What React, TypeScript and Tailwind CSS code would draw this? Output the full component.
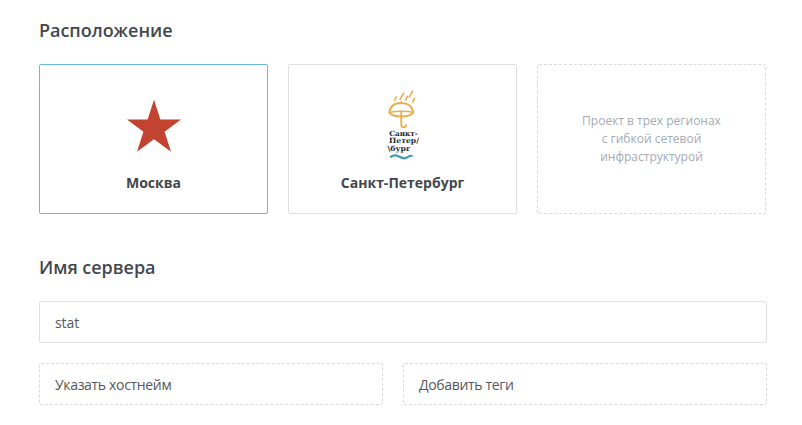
function Star() {
  return (
    <svg className="mt-[34px] block h-[54px] w-[56px] shrink-0" viewBox="0 0 56 54">
      <path
        d="M28 0.8 L34.4 20.6 L55 20.6 L38.6 32.7 L45 52.8 L28 40.3 L11 52.8 L17.4 32.7 L1 20.6 L21.6 20.6 Z"
        fill="#c2432f"
      />
    </svg>
  );
}

function Umbrella() {
  return (
    <svg className="mt-[24px] block h-[74px] w-[36px] shrink-0" viewBox="385 89 36 74">
      <g fill="none" stroke="#e9ad4a" strokeWidth="1.6" strokeLinecap="round">
        <path d="M394.6 100.5 L396.2 97 M400 99.5 L403.6 93.2 M405.8 100 L407.4 96.4 M409.2 97.2 L412.8 91.2 M412.8 102 L414.4 98.4" />
        <path
          d="M389.3 112.8 C390 106 395 103 401.2 103 C407.4 103 412.6 106 413.2 112.8 C411 115.3 406.8 116.4 401.3 116.4 C395.8 116.4 391.6 115.3 389.3 112.8 Z"
          strokeWidth="1.9"
        />
        <path d="M389.8 112.4 C395 110.8 407.8 110.8 413 112.4 M401.3 101.6 V103" />
        <path d="M401.3 112 V124.8 C401.3 128.2 406 128.2 406 125" strokeWidth="1.9" />
      </g>
      <g fill="#26282b" fontFamily="'DejaVu Serif', serif" fontWeight="700" fontSize="7.2">
        <text x="389.2" y="135.6" textLength="28.6" lengthAdjust="spacingAndGlyphs">Санкт-</text>
        <text x="389" y="143.2" textLength="30" lengthAdjust="spacingAndGlyphs">Петер/</text>
        <text x="387.4" y="150.5" textLength="23.4" lengthAdjust="spacingAndGlyphs">\бург</text>
      </g>
      <path
        d="M390.2 157.3 C393 154.8 396 154.8 399 156.6 C402.5 158.6 406 158.6 408 156.8 C409.3 155.7 410.8 155.6 412.6 156"
        fill="none"
        stroke="#4a9db3"
        strokeWidth="2.3"
      />
    </svg>
  );
}

export default function App() {
  return (
    <main className="h-[425px] w-[802px] overflow-hidden bg-white pl-[39px] font-['Open_Sans','Noto_Sans',sans-serif] text-[#43474d]">
      <h2 className="h-16 pt-4 text-[18px] leading-7 font-semibold tracking-[-0.03px]">Расположение</h2>
      <div className="flex gap-5">
        <button className="flex h-[150px] w-[229px] flex-col items-center rounded-xs border border-[#69b9dc]">
          <Star />
          <span className="mt-[20px] text-[14px] leading-5 font-bold">Москва</span>
        </button>
        <button className="flex h-[150px] w-[229px] flex-col items-center rounded-xs border border-[#dddfe0]">
          <Umbrella />
          <span className="mt-[10px] text-[14px] leading-5 font-bold">Санкт-Петербург</span>
        </button>
        <div className="flex h-[150px] w-[229px] items-center justify-center rounded-xs border border-dashed border-[#d8dadb] text-center text-[12px] leading-[18px] text-[#a4abb3]">
          <p>
            Проект в трех регионах
            <br />с гибкой сетевой
            <br />
            инфраструктурой
          </p>
        </div>
      </div>
      <h2 className="h-[87px] pt-[39px] text-[18px] leading-7 font-semibold tracking-[-0.03px]">Имя сервера</h2>
      <input
        className="block h-[42px] w-[728px] rounded-xs border border-[#dddfe0] px-[15px] text-[14px] tracking-[-0.1px] text-[#54575b] outline-none"
        defaultValue="stat"
      />
      <div className="mt-5 flex gap-5 text-[14px] tracking-[-0.33px] text-[#54575b]">
        <button className="h-[42px] w-[344px] rounded-xs border border-dashed border-[#d8dadb] px-[15px] text-left">
          Указать хостнейм
        </button>
        <button className="h-[42px] w-[364px] rounded-xs border border-dashed border-[#d8dadb] px-[15px] text-left">
          Добавить теги
        </button>
      </div>
    </main>
  );
}
